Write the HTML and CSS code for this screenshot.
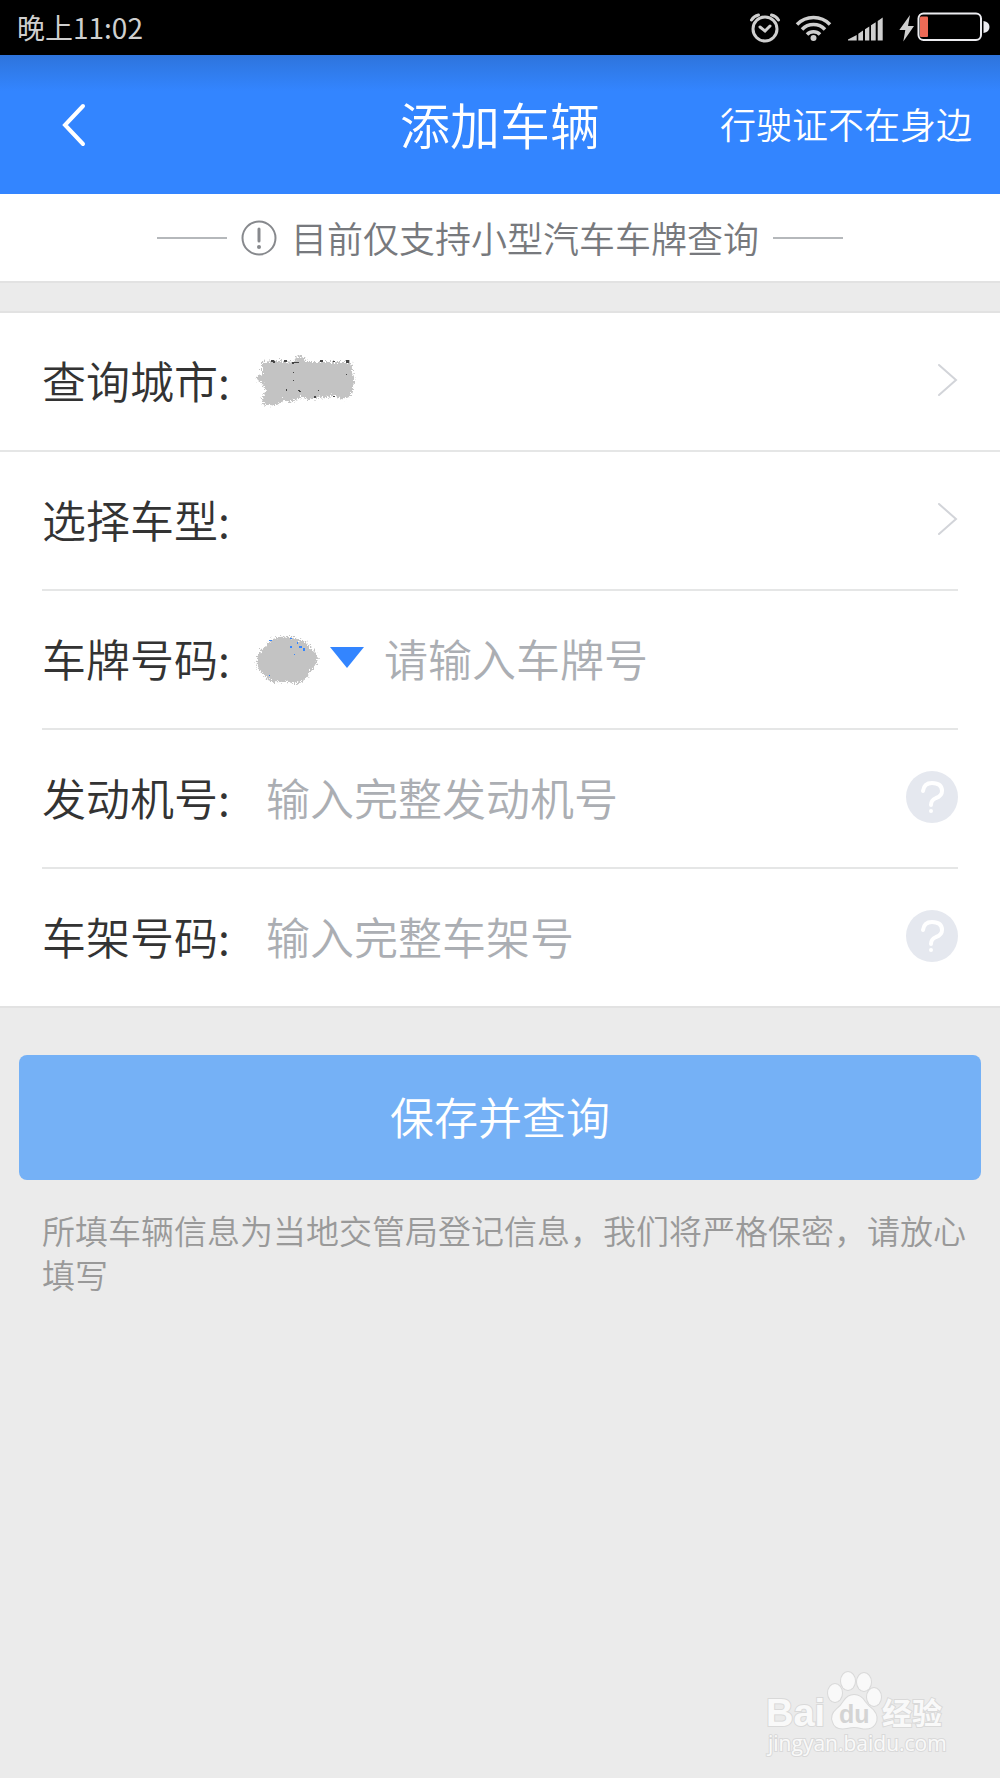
FILE: index.html
```
<!DOCTYPE html>
<html lang="zh-CN">
<head>
  <meta charset="UTF-8">
  <meta name="viewport" content="width=device-width, initial-scale=1.0">
  <title>添加车辆</title>
  <link rel="stylesheet" href="styles.css">
</head>
<body>
  <div class="status-bar">
    <span class="time">晚上11:02</span>
    <svg class="status-icons" width="242" height="34" viewBox="0 0 242 34" aria-hidden="true">
      <!-- alarm -->
      <g fill="none" stroke="#cfcfcf" stroke-linecap="round">
        <circle cx="17" cy="18" r="12" stroke-width="3"/>
        <path d="M12 16 L17 20 L22 15" stroke-width="3"/>
        <path d="M3.500 9 Q6 5 10.500 4 M30.500 9 Q28 5 23.500 4" stroke-width="3"/>
      </g>
      <!-- wifi -->
      <g fill="none" stroke="#cfcfcf" stroke-width="3.500">
        <path d="M49 13.500 A23 23 0 0 1 82 13.500"/>
        <path d="M54 18.500 A16 16 0 0 1 77 18.500"/>
        <path d="M59 23.500 A9 9 0 0 1 72 23.500"/>
        <circle cx="65.500" cy="27" r="3" fill="#cfcfcf" stroke="none"/>
      </g>
      <!-- signal -->
      <path fill="#cfcfcf" d="M100 29.500 V28.500 L108.700 24 V29.500 Z M110.300 22.700 L115 19.600 V29.500 H110.300 Z M117 18.300 L121.300 15.400 V29.500 H117 Z M123 14.300 L127.700 11.200 V29.500 H123 Z M129.700 9.900 L134.700 6.600 V29.500 H129.700 Z"/>
      <path fill="#cfcfcf" d="M162 4 L151.300 19 H157.300 L155.300 30.500 L166 15 H160 Z"/>
      <!-- battery -->
      <rect x="170.500" y="2.500" width="62.500" height="26.500" rx="5" fill="none" stroke="#ececf0" stroke-width="2"/>
      <rect x="172" y="5.500" width="8" height="20.500" rx="1" fill="#ee6a56"/>
      <path fill="#ececf0" d="M235.500 10 Q241.500 11 241.500 16 Q241.500 21 235.500 22 Z"/>
    </svg>
  </div>

  <header class="nav-bar">
    <button class="back" type="button" aria-label="返回">
      <svg width="28" height="44" viewBox="0 0 28 44">
        <path d="M25 3 L7 22 L25 41" fill="none" stroke="#fff" stroke-width="4" stroke-linecap="round"/>
      </svg>
    </button>
    <h1 class="title">添加车辆</h1>
    <a class="nav-link" href="#">行驶证不在身边</a>
  </header>

  <div class="notice">
    <span class="dash"></span>
    <svg width="36" height="36" viewBox="0 0 36 36" aria-hidden="true">
      <circle cx="18" cy="18" r="16.500" fill="none" stroke="#87898d" stroke-width="2"/>
      <path d="M18 9 V21" stroke="#87898d" stroke-width="3" stroke-linecap="round"/>
      <circle cx="18" cy="27" r="2" fill="#87898d"/>
    </svg>
    <span class="notice-text">目前仅支持小型汽车车牌查询</span>
    <span class="dash"></span>
  </div>

  <form class="vehicle-form">
    <div class="fields">
      <button class="row row-full" type="button">
        <span class="label">查询城市:</span>
        <svg class="smudge" width="104" height="56" viewBox="0 0 104 56" aria-hidden="true">
          <defs>
            <filter id="rough" x="-10%" y="-10%" width="120%" height="120%">
              <feTurbulence type="fractalNoise" baseFrequency="0.6" numOctaves="2" seed="4"/>
              <feDisplacementMap in="SourceGraphic" scale="9" xChannelSelector="R" yChannelSelector="G"/>
            </filter>
          </defs>
          <path fill="#c3c3c3" filter="url(#rough)" d="M8 10 Q23 8 40 10 Q43 3 46 3 Q50 4 52 10 L74 10 L97 10 L99 22 Q102 28 99 34 Q100 44 91 47 Q86 48 82 44 L61 46 Q52 50 47 44 Q40 52 29 48 Q26 55 15 53 Q6 53 9 44 L12 39 L8 31 Q1 29 3 24 L8 22 Z"/>
          <path fill="#444" d="M17 8 h3 v1 h1 v2 h-2 v-1 h-2 z M30 8 h3 v2 h-3 z M38 10 h7 v1 h-5 v1 h-2 z M66 8 h3 v2 h-3 z M79 9 h2 v1 h-2 z M92 8 h3 v3 h-3 z M39 20 h1 v1 h-1 z M39 28 h1 v1 h-1 z M92 22 h1 v1 h-1 z M32 37 h1 v2 h-1 z M44 38 h2 v1 h1 v1 h-2 v-1 h-1 z M60 44 h2 v2 h-2 z M64 38 h1 v1 h-1 z M79 44 h2 v1 h-2 z"/>
        </svg>
        <svg class="arrow" width="24" height="38" viewBox="0 0 24 38" aria-hidden="true">
          <path d="M5 4 L22 19 L5 34"/>
        </svg>
      </button>

      <button class="row" type="button">
        <span class="label">选择车型:</span>
        <svg class="arrow" width="24" height="38" viewBox="0 0 24 38" aria-hidden="true">
          <path d="M5 4 L22 19 L5 34"/>
        </svg>
      </button>

      <div class="row">
        <label class="label" for="plate">车牌号码:</label>
        <button class="province" type="button" aria-label="选择省份">
          <svg class="smudge" width="66" height="54" viewBox="0 0 66 54" aria-hidden="true">
            <path fill="#c3c3c3" filter="url(#rough)" d="M16 9 Q31 2 46 9 Q55 11 57 18 Q66 22 63 31 Q60 38 56 40 Q54 48 47 51 Q39 54 33 50 Q20 53 14 49 L9 43 Q1 36 3 28 Q5 19 11 16 Z"/>
            <path fill="#3385ff" d="M15 9 h3 v1 h-3 z M36 7 h2 v1 h-2 z M43 11 h1 v2 h-1 z M36 15 h2 v2 h-2 z M45 15 h3 v2 h-3 z M49 17 h2 v3 h-2 z M40 23 h1 v1 h-1 z M15 44 h1 v1 h-1 z"/>
          </svg>
          <svg width="34" height="22" viewBox="0 0 34 22" aria-hidden="true">
            <path fill="#3385ff" d="M0 0 H34 L17 21 Z"/>
          </svg>
        </button>
        <input id="plate" type="text" placeholder="请输入车牌号">
      </div>

      <div class="row">
        <label class="label" for="engine">发动机号:</label>
        <input id="engine" class="indent" type="text" placeholder="输入完整发动机号">
        <button class="help" type="button" aria-label="发动机号说明">
          <svg width="52" height="52" viewBox="0 0 52 52">
            <circle cx="26" cy="26" r="26" fill="#e5e8ef"/>
            <path d="M17 20 Q18 12 26 12 Q36 12 36 20 Q36 25 30 27 Q25 29 25 34" fill="none" stroke="#fff" stroke-width="4" stroke-linecap="round"/>
            <circle cx="25" cy="40" r="2" fill="#fff"/>
          </svg>
        </button>
      </div>

      <div class="row row-last">
        <label class="label" for="frame">车架号码:</label>
        <input id="frame" class="indent" type="text" placeholder="输入完整车架号">
        <button class="help" type="button" aria-label="车架号码说明">
          <svg width="52" height="52" viewBox="0 0 52 52">
            <circle cx="26" cy="26" r="26" fill="#e5e8ef"/>
            <path d="M17 20 Q18 12 26 12 Q36 12 36 20 Q36 25 30 27 Q25 29 25 34" fill="none" stroke="#fff" stroke-width="4" stroke-linecap="round"/>
            <circle cx="25" cy="40" r="2" fill="#fff"/>
          </svg>
        </button>
      </div>
    </div>

    <button class="save" type="submit">保存并查询</button>
    <p class="tip">所填车辆信息为当地交管局登记信息，我们将严格保密，请放心填写</p>
  </form>

  <svg class="watermark" width="190" height="96" viewBox="0 0 190 96">
    <g fill="#f9f9f9" stroke="#d9d9d9" stroke-width="2" paint-order="stroke">
      <text class="wm-logo" x="3" y="62">Bai</text>
      <ellipse cx="72" cy="29" rx="7" ry="9"/>
      <ellipse cx="85" cy="17" rx="7" ry="9"/>
      <ellipse cx="101" cy="18" rx="7" ry="9"/>
      <ellipse cx="111" cy="33" rx="7" ry="9"/>
      <path d="M91 31 Q98 31 102 38 Q105 42 110 46 Q116 53 112 60 Q108 66 98 64 Q91 62 84 64 Q72 66 70 58 Q67 51 74 45 Q78 42 81 37 Q85 31 91 31 Z"/>
      <text class="wm-cn" x="119" y="60">经验</text>
      <text class="wm-url" x="5" y="87">jingyan.baidu.com</text>
    </g>
    <text class="wm-du" x="76" y="59">du</text>
  </svg>
</body>
</html>
```
FILE: styles.css
```
* {
  box-sizing: border-box;
  margin: 0;
  padding: 0;
}

body {
  position: relative;
  min-height: 100vh;
  background: #ebebeb;
  color: #333;
  font-family: "Noto Sans CJK SC", sans-serif;
  font-weight: 350;
}

button, input {
  border: none;
  background: none;
  color: inherit;
  font: inherit;
}

button {
  cursor: pointer;
}

svg {
  display: block;
  flex-shrink: 0;
}

.status-bar {
  display: flex;
  align-items: center;
  justify-content: space-between;
  height: 55px;
  padding: 0 10px 0 17px;
  background: #000;
  color: #cfcfcf;
  font-size: 28px;
  font-weight: 400;
}

.time {
  padding-bottom: 2px;
}

.nav-bar {
  display: grid;
  grid-template-columns: 1fr auto 1fr;
  align-items: center;
  height: 139px;
  padding: 0 28px 0 58px;
  background: linear-gradient(#2e74dc, #3385ff 36px);
  color: #fff;
}

.back {
  justify-self: start;
}

.title {
  margin-right: -30px;
  margin-left: -60px;
  padding-bottom: 4px;
  font-size: 50px;
  font-weight: inherit;
}

.nav-link {
  justify-self: end;
  padding-bottom: 4px;
  color: #fff;
  font-size: 36px;
  text-decoration: none;
  white-space: nowrap;
}

.notice {
  display: flex;
  align-items: center;
  justify-content: center;
  gap: 14px;
  height: 89px;
  border-bottom: 2px solid #e2e2e2;
  background: #fff;
  color: #77797d;
  font-size: 36px;
}

.notice-text {
  padding-bottom: 2px;
}

.dash {
  width: 70px;
  height: 2px;
  background: #b5b8bb;
}

.fields {
  margin-top: 28px;
  border-top: 2px solid #e2e2e2;
  border-bottom: 2px solid #e2e2e2;
  background: #fff;
}

.row {
  display: flex;
  align-items: center;
  width: calc(100% - 84px);
  height: 139px;
  margin: 0 42px;
  padding-bottom: 4px;
  border-bottom: 2px solid #e5e6e6;
  font-size: 44px;
  text-align: left;
}

.row-full {
  width: 100%;
  margin: 0;
  padding: 0 42px 4px;
}

.row-last {
  height: 137px;
  border-bottom: none;
}

.label {
  flex-shrink: 0;
  width: 212px;
}

.arrow {
  margin-left: auto;
  fill: none;
  stroke: #d2d4d9;
  stroke-width: 2;
  stroke-linecap: round;
}

.province {
  display: flex;
  align-items: center;
  gap: 10px;
  margin-right: 20px;
}

.row input {
  flex: 1;
  min-width: 0;
  outline: none;
}

.row input::placeholder {
  color: #abaeb3;
  opacity: 1;
}

.row .indent {
  padding-left: 12px;
}

.save {
  display: block;
  width: calc(100% - 38px);
  height: 125px;
  margin: 47px 19px 0;
  padding-bottom: 4px;
  border-radius: 8px;
  background: #75b1f6;
  color: #fff;
  font-size: 44px;
}

.tip {
  padding: 28px 24px 0 42px;
  color: #999;
  font-size: 33px;
  line-height: 44px;
}

.watermark {
  position: absolute;
  right: 47px;
  bottom: 18px;
}

.wm-logo {
  font: bold 38px "Liberation Sans", sans-serif;
}

.wm-cn {
  font: bold 30px "Noto Sans CJK SC", sans-serif;
}

.wm-url {
  font: 21px "Open Sans", sans-serif;
}

.wm-du {
  fill: #d4d4d4;
  font: bold 25px "Liberation Sans", sans-serif;
}
```
